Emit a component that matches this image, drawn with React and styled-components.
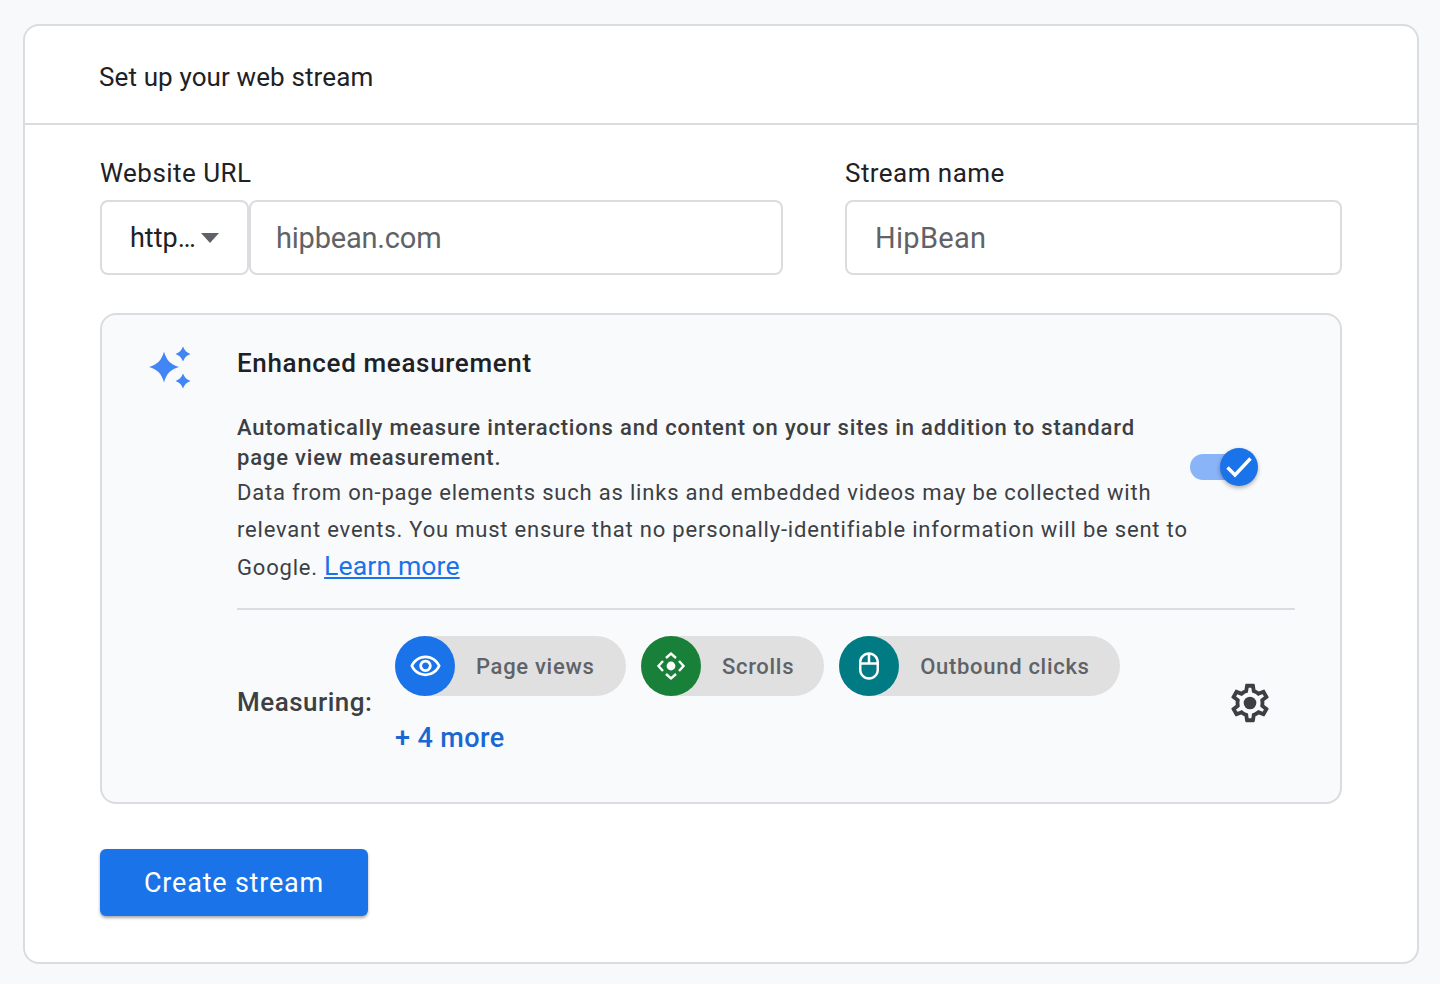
import React from "react";
import styled, { createGlobalStyle } from "styled-components";

const GlobalStyle = createGlobalStyle`
  html, body {
    margin: 0;
    padding: 0;
    background: #f8f9fb;
  }
  * {
    box-sizing: border-box;
  }
`;

const Page = styled.div`
  width: 1440px;
  height: 984px;
  padding: 24px 21px 20px 23px;
  font-family: Roboto, "Liberation Sans", sans-serif;
  color: #202124;
`;

const Card = styled.main`
  height: 940px;
  background: #fff;
  border: 2px solid #dadce0;
  border-radius: 16px;
`;

const CardHeader = styled.header`
  height: 99px;
  display: flex;
  align-items: center;
  padding: 4px 75px 0 74px;
  border-bottom: 2px solid #dadce0;
  font-size: 26px;
  letter-spacing: 0.12px;
`;

const CardBody = styled.div`
  padding: 30px 75px 0;
`;

const Fields = styled.div`
  display: flex;
  gap: 62px;
`;

const Field = styled.div`
  width: ${(p) => p.$width}px;
`;

const FieldLabel = styled.div`
  height: 45px;
  font-size: 26px;
  line-height: 36px;
  letter-spacing: 0.45px;
`;

const FieldRow = styled.div`
  display: flex;
`;

const Select = styled.div`
  width: 149px;
  height: 75px;
  display: flex;
  align-items: center;
  padding-left: 28px;
  gap: 5px;
  background: #fff;
  border: 2px solid #dadce0;
  border-radius: 8px;
  font-size: 27px;
`;

const Caret = styled.span`
  width: 0;
  height: 0;
  margin-top: 1px;
  border-left: 9px solid transparent;
  border-right: 9px solid transparent;
  border-top: 10px solid #5f6368;
`;

const TextInput = styled.div`
  flex: 1;
  height: 75px;
  display: flex;
  align-items: center;
  padding-left: ${(p) => p.$pad}px;
  padding-top: 1px;
  background: #fff;
  border: 2px solid #dadce0;
  border-radius: 8px;
  font-size: 29px;
  letter-spacing: ${(p) => p.$spacing || 0}px;
  color: #5f6368;
`;

const Panel = styled.section`
  height: 491px;
  margin-top: 38px;
  display: flex;
  background: #f9fafc;
  border: 2px solid #dadce0;
  border-radius: 16px;
  padding: 30px 45px 0 46px;
`;

const SparkWrap = styled.div`
  width: 89px;
  flex: none;
  padding-top: 1px;
`;

const PanelMain = styled.div`
  flex: 1;
`;

const PanelTitle = styled.h2`
  margin: 0;
  font-size: 26px;
  line-height: 36px;
  font-weight: 500;
  letter-spacing: 0.65px;
`;

const InfoRow = styled.div`
  display: flex;
  align-items: center;
  margin-top: 32px;
`;

const InfoText = styled.div`
  width: 953px;
  flex: none;
  letter-spacing: 0.8px;
  color: #3c4043;
`;

const Lead = styled.div`
  font-size: 22px;
  line-height: 30px;
  font-weight: 500;
  letter-spacing: 0.82px;
`;

const Detail = styled.div`
  margin-top: 1px;
  font-size: 22px;
  line-height: 37.4px;
`;

const LearnMore = styled.a`
  font-size: 26.6px;
  line-height: 1;
  letter-spacing: 0.1px;
  color: #1a73e8;
  text-decoration: underline;
`;

const Toggle = styled.div`
  position: relative;
  width: 68px;
  height: 38px;
  display: flex;
  align-items: center;
  margin-top: -66px;
`;

const Track = styled.div`
  width: 50px;
  height: 26px;
  border-radius: 13px;
  background: #8ab4f8;
`;

const Thumb = styled.div`
  position: absolute;
  right: 0;
  top: 0;
  width: 38px;
  height: 38px;
  display: flex;
  align-items: center;
  justify-content: center;
  border-radius: 50%;
  background: #1a73e8;
  box-shadow: 0 2px 4px rgba(0, 0, 0, 0.3);
`;

const Divider = styled.hr`
  margin: 22px 0 0;
  border: 0;
  border-top: 2px solid #dadce0;
`;

const MeasuringRow = styled.div`
  display: flex;
  align-items: center;
  padding-top: 26px;
`;

const MeasuringLabel = styled.div`
  width: 158px;
  flex: none;
  margin-top: 10px;
  font-size: 26px;
  font-weight: 500;
  color: #3c4043;
  letter-spacing: 0.5px;
`;

const Measures = styled.div`
  flex: 1;
`;

const Chips = styled.div`
  display: flex;
  gap: 15px;
`;

const Chip = styled.div`
  height: 60px;
  display: flex;
  align-items: center;
  gap: 21px;
  padding-right: ${(p) => p.$pad}px;
  border-radius: 30px;
  background: #e0e0e0;
  font-size: 22px;
  font-weight: 500;
  letter-spacing: 0.7px;
  color: #5f6368;
`;

const ChipIcon = styled.span`
  width: 60px;
  height: 60px;
  flex: none;
  display: flex;
  align-items: center;
  justify-content: center;
  border-radius: 50%;
  background: ${(p) => p.$color};
`;

const More = styled.div`
  margin-top: 23px;
  font-size: 27px;
  line-height: 38px;
  font-weight: 500;
  letter-spacing: 0.4px;
  color: #1967d2;
`;

const Gear = styled.svg`
  flex: none;
  margin-right: 22px;
  margin-top: 12px;
`;

const CreateButton = styled.button`
  display: block;
  width: 268px;
  height: 67px;
  margin-top: 45px;
  padding: 0;
  border: 0;
  border-radius: 6px;
  background: #1a73e8;
  box-shadow: 0 2px 3px rgba(60, 64, 67, 0.45);
  color: #fff;
  font-family: Roboto, sans-serif;
  font-size: 27px;
  letter-spacing: 0.8px;
`;

const Sparkle = () => (
  <svg width="44" height="44" viewBox="0 0 44 44" fill="#4285f4">
    <path d="M16 5.500 C18.500 14.500 22.500 18.500 31 21 C22.500 23.500 18.500 27.500 16 36.500 C13.500 27.500 9.500 23.500 1 21 C9.500 18.500 13.500 14.500 16 5.500 Z" />
    <path d="M35 0.500 C36.300 4.200 38.800 6.700 42.500 8 C38.800 9.300 36.300 11.800 35 15.500 C33.700 11.800 31.200 9.300 27.500 8 C31.200 6.700 33.700 4.200 35 0.500 Z" />
    <path d="M35 27.500 C36.300 31.200 38.800 33.700 42.500 35 C38.800 36.300 36.300 38.800 35 42.500 C33.700 38.800 31.200 36.300 27.500 35 C31.200 33.700 33.700 31.200 35 27.500 Z" />
  </svg>
);

const EyeIcon = () => (
  <svg width="33" height="33" viewBox="0 0 24 24" fill="#fff">
    <path d="M12 6c3.790 0 7.170 2.130 8.820 5.500C19.170 14.870 15.790 17 12 17s-7.170-2.130-8.820-5.500C4.830 8.130 8.210 6 12 6m0-2C7 4 2.730 7.110 1 11.500 2.730 15.890 7 19 12 19s9.270-3.110 11-7.500C21.270 7.110 17 4 12 4zm0 5c1.380 0 2.500 1.120 2.500 2.500S13.380 14 12 14s-2.500-1.120-2.500-2.500S10.620 9 12 9m0-2c-2.480 0-4.500 2.020-4.500 4.500S9.520 16 12 16s4.500-2.020 4.500-4.500S14.480 7 12 7z" />
  </svg>
);

const ScrollIcon = () => (
  <svg width="30" height="30" viewBox="0 0 30 30" fill="none" stroke="#fff" strokeWidth="2.400">
    <circle cx="15" cy="15" r="4.400" fill="#fff" stroke="none" />
    <path d="M10 7 15 2.500 20 7" />
    <path d="M10 23 15 27.500 20 23" />
    <path d="M7 10 2.500 15 7 20" />
    <path d="M23 10 27.500 15 23 20" />
  </svg>
);

const MouseIcon = () => (
  <svg width="30" height="30" viewBox="0 0 24 24" fill="#fff">
    <path d="M20 9c-.04-4.390-3.600-7.930-8-7.930S4.040 4.610 4 9v6c0 4.420 3.580 8 8 8s8-3.580 8-8V9zm-2 0h-5V3.160c2.810.47 4.960 2.900 5 5.840zm-7-5.840V9H6c.04-2.940 2.190-5.370 5-5.840zM18 15c0 3.310-2.690 6-6 6s-6-2.690-6-6v-4h12v4z" />
  </svg>
);

const Check = () => (
  <svg width="28" height="24" viewBox="0 0 28 24" fill="none" stroke="#fff" strokeWidth="3.400">
    <path d="M2.500 12.500 10 20 25.500 3.500" />
  </svg>
);

const GearIcon = () => (
  <Gear width="46" height="46" viewBox="0 0 24 24" fill="#3c4043">
    <path d="M19.430 12.980c.04-.32.07-.64.07-.98 0-.34-.03-.66-.07-.98l2.110-1.650c.19-.15.24-.42.12-.64l-2-3.460c-.09-.16-.26-.25-.44-.25-.06 0-.12.01-.17.03l-2.490 1c-.52-.4-1.080-.73-1.690-.98l-.38-2.650C14.460 2.180 14.250 2 14 2h-4c-.25 0-.46.18-.49.42l-.38 2.650c-.61.25-1.170.59-1.690.98l-2.490-1c-.06-.02-.12-.03-.18-.03-.17 0-.34.09-.43.25l-2 3.460c-.13.22-.07.49.12.64l2.110 1.650c-.04.32-.07.65-.07.98 0 .33.03.66.07.98l-2.110 1.650c-.19.15-.24.42-.12.64l2 3.460c.09.16.26.25.44.25.06 0 .12-.01.17-.03l2.490-1c.52.4 1.080.73 1.690.98l.38 2.650c.03.24.24.42.49.42h4c.25 0 .46-.18.49-.42l.38-2.650c.61-.25 1.170-.59 1.690-.98l2.490 1c.06.02.12.03.18.03.17 0 .34-.09.43-.25l2-3.460c.12-.22.07-.49-.12-.64l-2.110-1.650zm-1.980-1.710c.04.31.05.52.05.73 0 .21-.02.43-.05.73l-.14 1.130.89.7 1.080.84-.7 1.210-1.270-.51-1.040-.42-.9.68c-.43.32-.84.56-1.250.73l-1.060.43-.16 1.130-.2 1.350h-1.400l-.19-1.350-.16-1.130-1.060-.43c-.43-.18-.83-.41-1.230-.71l-.91-.7-1.060.43-1.270.51-.7-1.210 1.080-.84.89-.7-.14-1.130c-.03-.31-.05-.54-.05-.74s.02-.43.05-.73l.14-1.130-.89-.7-1.080-.84.7-1.210 1.270.51 1.040.42.9-.68c.43-.32.84-.56 1.250-.73l1.060-.43.16-1.130.2-1.350h1.390l.19 1.350.16 1.130 1.060.43c.43.18.83.41 1.230.71l.91.7 1.060-.43 1.270-.51.7 1.210-1.070.85-.89.7.14 1.130z" />
    <circle cx="12" cy="12" r="3.300" />
  </Gear>
);

export default function App() {
  return (
    <Page>
      <GlobalStyle />
      <Card>
        <CardHeader>Set up your web stream</CardHeader>
        <CardBody>
          <Fields>
            <Field $width={683}>
              <FieldLabel>Website URL</FieldLabel>
              <FieldRow>
                <Select>
                  http…
                  <Caret />
                </Select>
                <TextInput $pad={25} $spacing={-0.2}>hipbean.com</TextInput>
              </FieldRow>
            </Field>
            <Field $width={497}>
              <FieldLabel>Stream name</FieldLabel>
              <FieldRow>
                <TextInput $pad={28} $spacing={0.3}>HipBean</TextInput>
              </FieldRow>
            </Field>
          </Fields>

          <Panel>
            <SparkWrap>
              <Sparkle />
            </SparkWrap>
            <PanelMain>
              <PanelTitle>Enhanced measurement</PanelTitle>
              <InfoRow>
                <InfoText>
                  <Lead>
                    Automatically measure interactions and content on your sites in addition to standard page view measurement.
                  </Lead>
                  <Detail>
                    Data from on-page elements such as links and embedded videos may be collected with relevant events. You must ensure that no personally-identifiable information will be sent to Google. <LearnMore>Learn more</LearnMore>
                  </Detail>
                </InfoText>
                <Toggle>
                  <Track />
                  <Thumb>
                    <Check />
                  </Thumb>
                </Toggle>
              </InfoRow>
              <Divider />
              <MeasuringRow>
                <MeasuringLabel>Measuring:</MeasuringLabel>
                <Measures>
                  <Chips>
                    <Chip $pad={31.5}>
                      <ChipIcon $color="#1a73e8"><EyeIcon /></ChipIcon>
                      Page views
                    </Chip>
                    <Chip $pad={30}>
                      <ChipIcon $color="#188038"><ScrollIcon /></ChipIcon>
                      Scrolls
                    </Chip>
                    <Chip $pad={30}>
                      <ChipIcon $color="#007b83"><MouseIcon /></ChipIcon>
                      Outbound clicks
                    </Chip>
                  </Chips>
                  <More>+ 4 more</More>
                </Measures>
                <GearIcon />
              </MeasuringRow>
            </PanelMain>
          </Panel>

          <CreateButton>Create stream</CreateButton>
        </CardBody>
      </Card>
    </Page>
  );
}
